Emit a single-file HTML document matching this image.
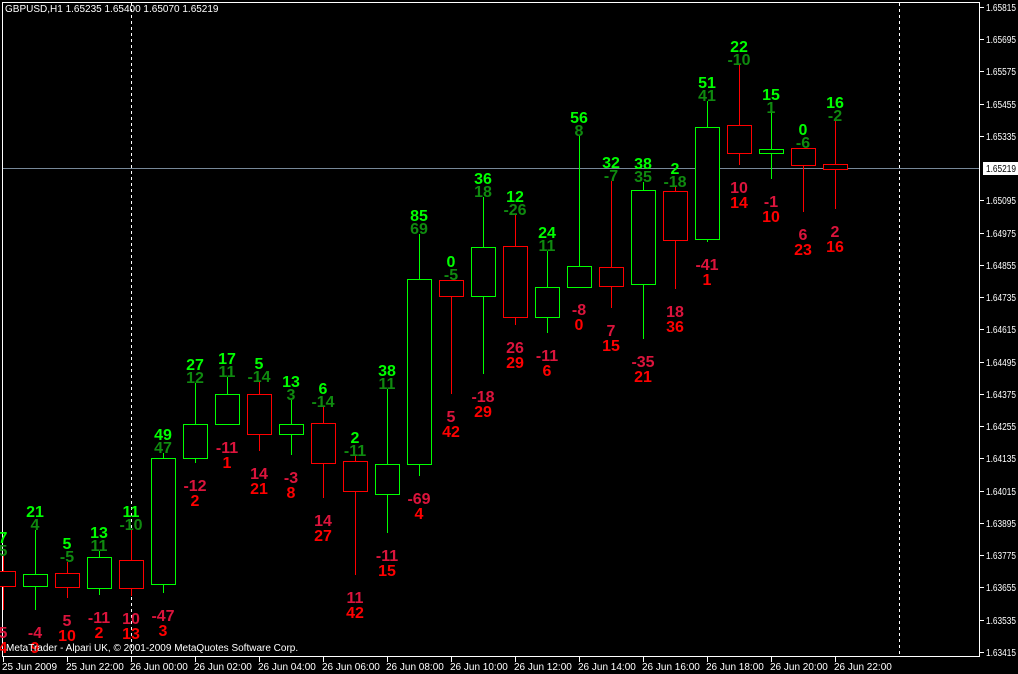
<!DOCTYPE html>
<html><head><meta charset="utf-8"><style>
html,body{margin:0;padding:0;background:#000;width:1018px;height:674px;overflow:hidden}
svg{display:block}
.t1{fill:#00ff00}.t2{fill:#0f8a0f}.b1{fill:#dc143c}.b2{fill:#ff0000}
.l{font:bold 16px "Liberation Sans",Arial,sans-serif;text-anchor:middle}
.ax{font:10px "Liberation Sans",Arial,sans-serif;fill:#fff}
</style></head><body>
<svg width="1018" height="674" xmlns="http://www.w3.org/2000/svg" shape-rendering="crispEdges">
<rect width="1018" height="674" fill="#000"/>
<line x1="131.5" y1="3" x2="131.5" y2="657" stroke="#fff" stroke-dasharray="3,3"/>
<line x1="899.5" y1="3" x2="899.5" y2="657" stroke="#fff" stroke-dasharray="3,3"/>
<line x1="3" y1="168.5" x2="980" y2="168.5" stroke="#778899"/>
<rect x="2.5" y="2.5" width="977" height="654" fill="none" stroke="#fff"/>

<g stroke-width="1">
<g stroke="#ff0000"><line x1="3.5" y1="556" x2="3.5" y2="610"/><rect x="-8.5" y="571.5" width="24" height="15" fill="#000"/></g>
<g stroke="#00ff00"><line x1="35.5" y1="530" x2="35.5" y2="610"/><rect x="23.5" y="574.5" width="24" height="12" fill="#000"/></g>
<g stroke="#ff0000"><line x1="67.5" y1="562" x2="67.5" y2="598"/><rect x="55.5" y="573.5" width="24" height="14" fill="#000"/></g>
<g stroke="#00ff00"><line x1="99.5" y1="551" x2="99.5" y2="595"/><rect x="87.5" y="557.5" width="24" height="31" fill="#000"/></g>
<g stroke="#ff0000"><line x1="131.5" y1="530" x2="131.5" y2="596"/><rect x="119.5" y="560.5" width="24" height="28" fill="#000"/></g>
<g stroke="#00ff00"><line x1="163.5" y1="453" x2="163.5" y2="593"/><rect x="151.5" y="458.5" width="24" height="126" fill="#000"/></g>
<g stroke="#00ff00"><line x1="195.5" y1="383" x2="195.5" y2="463"/><rect x="183.5" y="424.5" width="24" height="34" fill="#000"/></g>
<g stroke="#00ff00"><line x1="227.5" y1="377" x2="227.5" y2="425"/><rect x="215.5" y="394.5" width="24" height="30" fill="#000"/></g>
<g stroke="#ff0000"><line x1="259.5" y1="382" x2="259.5" y2="451"/><rect x="247.5" y="394.5" width="24" height="40" fill="#000"/></g>
<g stroke="#00ff00"><line x1="291.5" y1="400" x2="291.5" y2="455"/><rect x="279.5" y="424.5" width="24" height="10" fill="#000"/></g>
<g stroke="#ff0000"><line x1="323.5" y1="407" x2="323.5" y2="498"/><rect x="311.5" y="423.5" width="24" height="40" fill="#000"/></g>
<g stroke="#ff0000"><line x1="355.5" y1="456" x2="355.5" y2="575"/><rect x="343.5" y="461.5" width="24" height="30" fill="#000"/></g>
<g stroke="#00ff00"><line x1="387.5" y1="389" x2="387.5" y2="533"/><rect x="375.5" y="464.5" width="24" height="30" fill="#000"/></g>
<g stroke="#00ff00"><line x1="419.5" y1="234" x2="419.5" y2="476"/><rect x="407.5" y="279.5" width="24" height="185" fill="#000"/></g>
<g stroke="#ff0000"><line x1="451.5" y1="280" x2="451.5" y2="394"/><rect x="439.5" y="280.5" width="24" height="16" fill="#000"/></g>
<g stroke="#00ff00"><line x1="483.5" y1="197" x2="483.5" y2="374"/><rect x="471.5" y="247.5" width="24" height="49" fill="#000"/></g>
<g stroke="#ff0000"><line x1="515.5" y1="215" x2="515.5" y2="325"/><rect x="503.5" y="246.5" width="24" height="71" fill="#000"/></g>
<g stroke="#00ff00"><line x1="547.5" y1="251" x2="547.5" y2="333"/><rect x="535.5" y="287.5" width="24" height="30" fill="#000"/></g>
<g stroke="#00ff00"><line x1="579.5" y1="136" x2="579.5" y2="287"/><rect x="567.5" y="266.5" width="24" height="21" fill="#000"/></g>
<g stroke="#ff0000"><line x1="611.5" y1="181" x2="611.5" y2="308"/><rect x="599.5" y="267.5" width="24" height="19" fill="#000"/></g>
<g stroke="#00ff00"><line x1="643.5" y1="182" x2="643.5" y2="339"/><rect x="631.5" y="190.5" width="24" height="94" fill="#000"/></g>
<g stroke="#ff0000"><line x1="675.5" y1="187" x2="675.5" y2="289"/><rect x="663.5" y="191.5" width="24" height="49" fill="#000"/></g>
<g stroke="#00ff00"><line x1="707.5" y1="101" x2="707.5" y2="242"/><rect x="695.5" y="127.5" width="24" height="112" fill="#000"/></g>
<g stroke="#ff0000"><line x1="739.5" y1="65" x2="739.5" y2="165"/><rect x="727.5" y="125.5" width="24" height="28" fill="#000"/></g>
<g stroke="#00ff00"><line x1="771.5" y1="113" x2="771.5" y2="179"/><rect x="759.5" y="149.5" width="24" height="4" fill="#000"/></g>
<g stroke="#ff0000"><line x1="803.5" y1="148" x2="803.5" y2="212"/><rect x="791.5" y="148.5" width="24" height="17" fill="#000"/></g>
<g stroke="#ff0000"><line x1="835.5" y1="121" x2="835.5" y2="209"/><rect x="823.5" y="164.5" width="24" height="5" fill="#000"/></g>
</g>

<g class="l">
<text x="3" y="543" class="t1">7</text><text x="3" y="556" class="t2">5</text><text x="3" y="638" class="b1">5</text><text x="3" y="653" class="b2">4</text>
<text x="35" y="517" class="t1">21</text><text x="35" y="530" class="t2">4</text><text x="35" y="638" class="b1">-4</text><text x="35" y="653" class="b2">9</text>
<text x="67" y="549" class="t1">5</text><text x="67" y="562" class="t2">-5</text><text x="67" y="626" class="b1">5</text><text x="67" y="641" class="b2">10</text>
<text x="99" y="538" class="t1">13</text><text x="99" y="551" class="t2">11</text><text x="99" y="623" class="b1">-11</text><text x="99" y="638" class="b2">2</text>
<text x="131" y="517" class="t1">11</text><text x="131" y="530" class="t2">-10</text><text x="131" y="624" class="b1">10</text><text x="131" y="639" class="b2">13</text>
<text x="163" y="440" class="t1">49</text><text x="163" y="453" class="t2">47</text><text x="163" y="621" class="b1">-47</text><text x="163" y="636" class="b2">3</text>
<text x="195" y="370" class="t1">27</text><text x="195" y="383" class="t2">12</text><text x="195" y="491" class="b1">-12</text><text x="195" y="506" class="b2">2</text>
<text x="227" y="364" class="t1">17</text><text x="227" y="377" class="t2">11</text><text x="227" y="453" class="b1">-11</text><text x="227" y="468" class="b2">1</text>
<text x="259" y="369" class="t1">5</text><text x="259" y="382" class="t2">-14</text><text x="259" y="479" class="b1">14</text><text x="259" y="494" class="b2">21</text>
<text x="291" y="387" class="t1">13</text><text x="291" y="400" class="t2">3</text><text x="291" y="483" class="b1">-3</text><text x="291" y="498" class="b2">8</text>
<text x="323" y="394" class="t1">6</text><text x="323" y="407" class="t2">-14</text><text x="323" y="526" class="b1">14</text><text x="323" y="541" class="b2">27</text>
<text x="355" y="443" class="t1">2</text><text x="355" y="456" class="t2">-11</text><text x="355" y="603" class="b1">11</text><text x="355" y="618" class="b2">42</text>
<text x="387" y="376" class="t1">38</text><text x="387" y="389" class="t2">11</text><text x="387" y="561" class="b1">-11</text><text x="387" y="576" class="b2">15</text>
<text x="419" y="221" class="t1">85</text><text x="419" y="234" class="t2">69</text><text x="419" y="504" class="b1">-69</text><text x="419" y="519" class="b2">4</text>
<text x="451" y="267" class="t1">0</text><text x="451" y="280" class="t2">-5</text><text x="451" y="422" class="b1">5</text><text x="451" y="437" class="b2">42</text>
<text x="483" y="184" class="t1">36</text><text x="483" y="197" class="t2">18</text><text x="483" y="402" class="b1">-18</text><text x="483" y="417" class="b2">29</text>
<text x="515" y="202" class="t1">12</text><text x="515" y="215" class="t2">-26</text><text x="515" y="353" class="b1">26</text><text x="515" y="368" class="b2">29</text>
<text x="547" y="238" class="t1">24</text><text x="547" y="251" class="t2">11</text><text x="547" y="361" class="b1">-11</text><text x="547" y="376" class="b2">6</text>
<text x="579" y="123" class="t1">56</text><text x="579" y="136" class="t2">8</text><text x="579" y="315" class="b1">-8</text><text x="579" y="330" class="b2">0</text>
<text x="611" y="168" class="t1">32</text><text x="611" y="181" class="t2">-7</text><text x="611" y="336" class="b1">7</text><text x="611" y="351" class="b2">15</text>
<text x="643" y="169" class="t1">38</text><text x="643" y="182" class="t2">35</text><text x="643" y="367" class="b1">-35</text><text x="643" y="382" class="b2">21</text>
<text x="675" y="174" class="t1">2</text><text x="675" y="187" class="t2">-18</text><text x="675" y="317" class="b1">18</text><text x="675" y="332" class="b2">36</text>
<text x="707" y="88" class="t1">51</text><text x="707" y="101" class="t2">41</text><text x="707" y="270" class="b1">-41</text><text x="707" y="285" class="b2">1</text>
<text x="739" y="52" class="t1">22</text><text x="739" y="65" class="t2">-10</text><text x="739" y="193" class="b1">10</text><text x="739" y="208" class="b2">14</text>
<text x="771" y="100" class="t1">15</text><text x="771" y="113" class="t2">1</text><text x="771" y="207" class="b1">-1</text><text x="771" y="222" class="b2">10</text>
<text x="803" y="135" class="t1">0</text><text x="803" y="148" class="t2">-6</text><text x="803" y="240" class="b1">6</text><text x="803" y="255" class="b2">23</text>
<text x="835" y="108" class="t1">16</text><text x="835" y="121" class="t2">-2</text><text x="835" y="237" class="b1">2</text><text x="835" y="252" class="b2">16</text>
</g>

<text x="5" y="12" class="ax">GBPUSD,H1  1.65235 1.65400 1.65070 1.65219</text>
<text x="6" y="651" class="ax">MetaTrader - Alpari UK, © 2001-2009 MetaQuotes Software Corp.</text>

<g stroke="#fff">
<line x1="980" y1="7.5" x2="984" y2="7.5"/><line x1="980" y1="39.5" x2="984" y2="39.5"/><line x1="980" y1="71.5" x2="984" y2="71.5"/><line x1="980" y1="104.5" x2="984" y2="104.5"/><line x1="980" y1="136.5" x2="984" y2="136.5"/><line x1="980" y1="200.5" x2="984" y2="200.5"/><line x1="980" y1="233.5" x2="984" y2="233.5"/><line x1="980" y1="265.5" x2="984" y2="265.5"/><line x1="980" y1="297.5" x2="984" y2="297.5"/><line x1="980" y1="329.5" x2="984" y2="329.5"/><line x1="980" y1="362.5" x2="984" y2="362.5"/><line x1="980" y1="394.5" x2="984" y2="394.5"/><line x1="980" y1="426.5" x2="984" y2="426.5"/><line x1="980" y1="458.5" x2="984" y2="458.5"/><line x1="980" y1="491.5" x2="984" y2="491.5"/><line x1="980" y1="523.5" x2="984" y2="523.5"/><line x1="980" y1="555.5" x2="984" y2="555.5"/><line x1="980" y1="587.5" x2="984" y2="587.5"/><line x1="980" y1="620.5" x2="984" y2="620.5"/><line x1="980" y1="652.5" x2="984" y2="652.5"/>
</g>
<g class="ax">
<text x="986" y="11" textLength="30" lengthAdjust="spacingAndGlyphs">1.65815</text><text x="986" y="43" textLength="30" lengthAdjust="spacingAndGlyphs">1.65695</text><text x="986" y="75" textLength="30" lengthAdjust="spacingAndGlyphs">1.65575</text><text x="986" y="108" textLength="30" lengthAdjust="spacingAndGlyphs">1.65455</text><text x="986" y="140" textLength="30" lengthAdjust="spacingAndGlyphs">1.65335</text><text x="986" y="204" textLength="30" lengthAdjust="spacingAndGlyphs">1.65095</text><text x="986" y="237" textLength="30" lengthAdjust="spacingAndGlyphs">1.64975</text><text x="986" y="269" textLength="30" lengthAdjust="spacingAndGlyphs">1.64855</text><text x="986" y="301" textLength="30" lengthAdjust="spacingAndGlyphs">1.64735</text><text x="986" y="333" textLength="30" lengthAdjust="spacingAndGlyphs">1.64615</text><text x="986" y="366" textLength="30" lengthAdjust="spacingAndGlyphs">1.64495</text><text x="986" y="398" textLength="30" lengthAdjust="spacingAndGlyphs">1.64375</text><text x="986" y="430" textLength="30" lengthAdjust="spacingAndGlyphs">1.64255</text><text x="986" y="462" textLength="30" lengthAdjust="spacingAndGlyphs">1.64135</text><text x="986" y="495" textLength="30" lengthAdjust="spacingAndGlyphs">1.64015</text><text x="986" y="527" textLength="30" lengthAdjust="spacingAndGlyphs">1.63895</text><text x="986" y="559" textLength="30" lengthAdjust="spacingAndGlyphs">1.63775</text><text x="986" y="591" textLength="30" lengthAdjust="spacingAndGlyphs">1.63655</text><text x="986" y="624" textLength="30" lengthAdjust="spacingAndGlyphs">1.63535</text><text x="986" y="656" textLength="30" lengthAdjust="spacingAndGlyphs">1.63415</text>
</g>
<rect x="983" y="162" width="35" height="13" fill="#fff"/>
<text x="986" y="172" textLength="30" lengthAdjust="spacingAndGlyphs" style="font:10px 'Liberation Sans',Arial,sans-serif;fill:#000">1.65219</text>

<g stroke="#fff">
<line x1="3.5" y1="657" x2="3.5" y2="662"/><line x1="67.5" y1="657" x2="67.5" y2="662"/><line x1="131.5" y1="657" x2="131.5" y2="662"/><line x1="195.5" y1="657" x2="195.5" y2="662"/><line x1="259.5" y1="657" x2="259.5" y2="662"/><line x1="323.5" y1="657" x2="323.5" y2="662"/><line x1="387.5" y1="657" x2="387.5" y2="662"/><line x1="451.5" y1="657" x2="451.5" y2="662"/><line x1="515.5" y1="657" x2="515.5" y2="662"/><line x1="579.5" y1="657" x2="579.5" y2="662"/><line x1="643.5" y1="657" x2="643.5" y2="662"/><line x1="707.5" y1="657" x2="707.5" y2="662"/><line x1="771.5" y1="657" x2="771.5" y2="662"/><line x1="835.5" y1="657" x2="835.5" y2="662"/>
</g>
<g class="ax">
<text x="2" y="670">25 Jun 2009</text><text x="66" y="670">25 Jun 22:00</text><text x="130" y="670">26 Jun 00:00</text><text x="194" y="670">26 Jun 02:00</text><text x="258" y="670">26 Jun 04:00</text><text x="322" y="670">26 Jun 06:00</text><text x="386" y="670">26 Jun 08:00</text><text x="450" y="670">26 Jun 10:00</text><text x="514" y="670">26 Jun 12:00</text><text x="578" y="670">26 Jun 14:00</text><text x="642" y="670">26 Jun 16:00</text><text x="706" y="670">26 Jun 18:00</text><text x="770" y="670">26 Jun 20:00</text><text x="834" y="670">26 Jun 22:00</text>
</g>
</svg>
</body></html>
